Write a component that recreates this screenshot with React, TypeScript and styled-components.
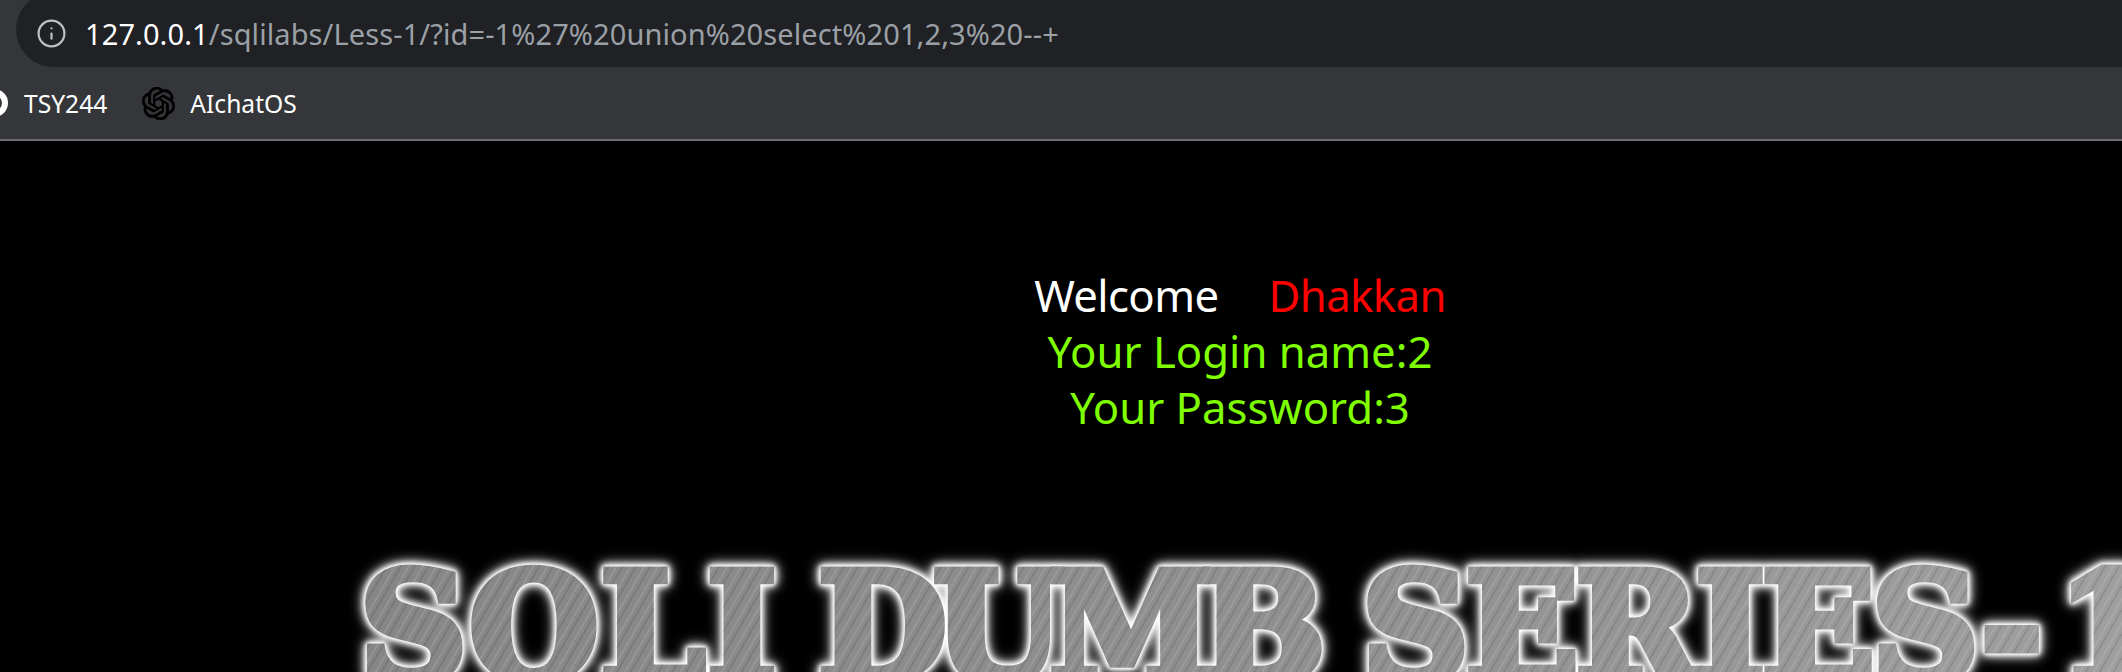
import React from 'react';
import styled, { createGlobalStyle } from 'styled-components';
import { Info } from 'lucide-react';
import { SiOpenai } from 'react-icons/si';

const GlobalStyle = createGlobalStyle`
    html, body {
        margin: 0;
        padding: 0;
        width: 100%;
        height: 672px;
        overflow: hidden;
        background: #000;
    }
`;

const Page = styled.div`
    width: 2122px;
    height: 672px;
    display: flex;
    flex-direction: column;
    overflow: hidden;
    background: #000;
    font-family: "Noto Sans", "Open Sans", sans-serif;
`;

const AddressRow = styled.div`
    height: 67px;
    flex: none;
    padding-left: 16px;
    background: #35363a;
    overflow: hidden;
`;

const AddressBar = styled.div`
    height: 75px;
    margin-top: -8px;
    display: flex;
    align-items: center;
    padding: 8px 0 0 20px;
    border-radius: 38px 0 0 38px;
    background: #202124;
    box-sizing: border-box;
`;

const InfoIcon = styled(Info)`
    flex: none;
    width: 31px;
    height: 31px;
    color: #bdc1c6;
`;

const Url = styled.div`
    margin: 0 0 0 18px;
    font-size: 29px;
    letter-spacing: 0.1px;
    color: #9aa0a6;
    white-space: nowrap;
    b {
        font-weight: 400;
        color: #fff;
    }
`;

const BookmarkBar = styled.div`
    height: 72px;
    flex: none;
    display: flex;
    align-items: center;
    background: #35363a;
    border-bottom: 2px solid #6b6c6f;
`;

const Bookmark = styled.div`
    display: flex;
    align-items: center;
    margin-right: 35px;
    font-size: 24.6px;
    color: #fff;
    white-space: nowrap;
`;

const GlobeStub = styled.svg`
    flex: none;
    width: 8px;
    height: 32px;
    margin-right: 16px;
`;

const GptIcon = styled(SiOpenai)`
    flex: none;
    width: 33px;
    height: 33px;
    margin-right: 15px;
    color: #000;
    stroke: #000;
    stroke-width: 0.5px;
`;

const Content = styled.div`
    flex: 1;
    min-height: 0;
    padding: 126px 0 0 358px;
    display: flex;
    flex-direction: column;
    align-items: center;
    overflow: hidden;
`;

const Message = styled.div`
    font-size: 43.7px;
    line-height: 56px;
    text-align: center;
    white-space: nowrap;
`;

const Greeting = styled.div`
    letter-spacing: -0.6px;
`;

const Word = styled.span<{ $color: string }>`
    color: ${(p) => p.$color};
`;

const Spacer = styled.span`
    display: inline-block;
    width: 50px;
`;

const BannerRow = styled.div`
    align-self: flex-start;
    margin: 118px 0 0 -358px;
    padding-left: 360px;
`;

const Banner = styled.div`
    font-family: "DejaVu Serif", "Liberation Serif", serif;
    font-weight: 700;
    font-size: 148px;
    line-height: 148px;
    white-space: nowrap;
    color: transparent;
    background:
        repeating-linear-gradient(120deg, rgba(255, 255, 255, 0.1) 0 2px, transparent 2px 5px, rgba(0, 0, 0, 0.09) 5px 7px, transparent 7px 12px),
        linear-gradient(90deg, #868686 0%, #929292 60%, #a0a0a0 100%);
    -webkit-background-clip: text;
    background-clip: text;
    -webkit-text-stroke: 9px transparent;
    filter: drop-shadow(0 0 1px #fff) drop-shadow(0 0 2px #fff) drop-shadow(0 0 3px #fff) drop-shadow(0 0 6px rgba(255, 255, 255, 0.9));
`;

const BannerWord = styled.span<{ $tracking: number; $gap: number }>`
    letter-spacing: ${(p) => p.$tracking}px;
    margin-right: ${(p) => p.$gap}px;
`;

const App = () => {
    return (
        <Page>
            <GlobalStyle />
            <AddressRow>
                <AddressBar>
                    <InfoIcon strokeWidth={1.7} />
                    <Url><b>127.0.0.1</b>/sqlilabs/Less-1/?id=-1%27%20union%20select%201,2,3%20--+</Url>
                </AddressBar>
            </AddressRow>
            <BookmarkBar>
                <Bookmark>
                    <GlobeStub viewBox="0 0 8 32">
                        <circle cx="-6" cy="16" r="14" fill="#fff" />
                        <circle cx="-6" cy="16" r="8" fill="#35363a" />
                    </GlobeStub>
                    TSY244
                </Bookmark>
                <Bookmark>
                    <GptIcon />
                    AIchatOS
                </Bookmark>
            </BookmarkBar>
            <Content>
                <Message>
                    <Greeting>
                        <Word $color="#fff">Welcome</Word>
                        <Spacer />
                        <Word $color="#f00">Dhakkan</Word>
                    </Greeting>
                    <Word $color="#7fff00">Your Login name:2</Word>
                    <br />
                    <Word $color="#7fff00">Your Password:3</Word>
                </Message>
                <BannerRow>
                    <Banner>
                        <BannerWord $tracking={2.5} $gap={-15}>SQLI </BannerWord>
                        <BannerWord $tracking={-13} $gap={11}>DUMB </BannerWord>
                        <BannerWord $tracking={-3} $gap={18}>SERIES-</BannerWord>
                        <BannerWord $tracking={0} $gap={0}>1</BannerWord>
                    </Banner>
                </BannerRow>
            </Content>
        </Page>
    );
};

export default App;
